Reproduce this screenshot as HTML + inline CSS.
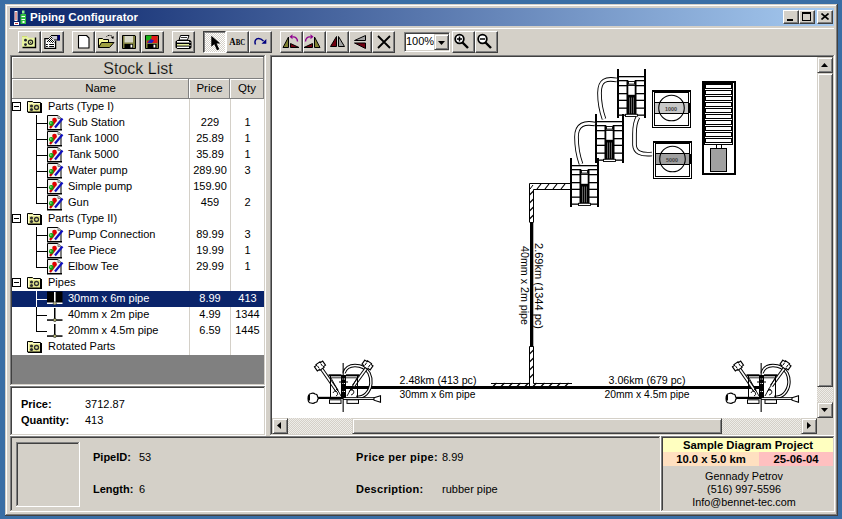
<!DOCTYPE html>
<html><head><meta charset="utf-8"><style>*{box-sizing:border-box;margin:0;padding:0}
html,body{width:842px;height:519px;overflow:hidden;background:#3A6EA5;font-family:"Liberation Sans",sans-serif;font-size:11px;color:#000;position:relative}
.a{position:absolute}
.tb{width:23px;height:22px;top:31px;background:#D4D0C8;border-top:1px solid #fff;border-left:1px solid #fff;border-right:1px solid #404040;border-bottom:1px solid #404040;box-shadow:inset -1px -1px 0 #808080}
.sb{position:absolute;background:#D4D0C8;border-top:1px solid #D4D0C8;border-left:1px solid #D4D0C8;border-right:1px solid #404040;border-bottom:1px solid #404040;box-shadow:inset 1px 1px 0 #fff,inset -1px -1px 0 #808080}
.trk{position:absolute;background-color:#EEECE8;background-image:linear-gradient(45deg,#D4D0C8 25%,transparent 25%,transparent 75%,#D4D0C8 75%),linear-gradient(45deg,#D4D0C8 25%,transparent 25%,transparent 75%,#D4D0C8 75%);background-size:2px 2px;background-position:0 0,1px 1px}
.cb{width:16px;height:14px;top:10px;background:#D4D0C8;border-top:1px solid #fff;border-left:1px solid #fff;border-right:1px solid #404040;border-bottom:1px solid #404040;box-shadow:inset -1px -1px 0 #808080}
.tx{position:absolute;white-space:pre}
b{font-weight:bold}
</style></head><body>
<div class="a" style="left:5px;top:4px;width:833px;height:512px;background:#D4D0C8;"></div>
<div class="a" style="left:5px;top:4px;width:833px;height:1px;background:#D4D0C8;"></div>
<div class="a" style="left:5px;top:4px;width:1px;height:512px;background:#D4D0C8;"></div>
<div class="a" style="left:5px;top:515px;width:833px;height:1px;background:#404040;"></div>
<div class="a" style="left:837px;top:4px;width:1px;height:512px;background:#404040;"></div>
<div class="a" style="left:6px;top:5px;width:831px;height:1px;background:#fff;"></div>
<div class="a" style="left:6px;top:5px;width:1px;height:510px;background:#fff;"></div>
<div class="a" style="left:6px;top:514px;width:831px;height:1px;background:#808080;"></div>
<div class="a" style="left:836px;top:5px;width:1px;height:510px;background:#808080;"></div>
<div class="a" style="left:10px;top:8px;width:824px;height:18px;background:linear-gradient(to right,#0A246A,#A6CAF0)"></div>
<svg class="a" style="left:14px;top:10px" width="16" height="16" viewBox="0 0 16 16">
<rect x="0.5" y="1" width="3" height="10" fill="#fff"/><rect x="1.5" y="2" width="1" height="8" fill="#c03030"/>
<rect x="0" y="12" width="5" height="3" fill="#fff"/><rect x="1" y="13" width="3" height="1" fill="#c03030"/>
<rect x="6.5" y="4" width="5.5" height="10" fill="#30c040"/><rect x="8" y="0.5" width="2.5" height="3" fill="#90f090"/>
<rect x="7.5" y="6" width="3.5" height="1" fill="#fff"/><rect x="7.5" y="9" width="3.5" height="1" fill="#fff"/><rect x="8.5" y="11" width="2" height="2" fill="#fff"/>
</svg>
<div class="a" style="left:30px;top:11px;white-space:pre;color:#fff;font-weight:bold;font-size:11.5px;line-height:13px">Piping Configurator</div>
<div class="a cb" style="left:783px"><div class="a" style="left:3px;top:8px;width:6px;height:2px;background:#000"></div></div>
<div class="a cb" style="left:799px"><div class="a" style="left:2px;top:1px;width:9px;height:9px;border:1px solid #000;border-top-width:2px"></div></div>
<div class="a cb" style="left:817px"><svg class="a" style="left:3px;top:2px" width="8" height="7"><path d="M0.5 0.5L7.5 6.5M7.5 0.5L0.5 6.5" stroke="#000" stroke-width="1.6"/></svg></div>
<div class="a" style="left:9px;top:28px;width:825px;height:1px;background:#fff;"></div>
<div class="a tb" style="left:18px;width:23px"></div>
<div class="a tb" style="left:41px;width:23px"></div>
<div class="a tb" style="left:72px;width:23px"></div>
<div class="a tb" style="left:95px;width:23px"></div>
<div class="a tb" style="left:118px;width:23px"></div>
<div class="a tb" style="left:141px;width:23px"></div>
<div class="a tb" style="left:172px;width:23px"></div>
<div class="a tb" style="left:226px;width:23px"></div>
<div class="a tb" style="left:249px;width:23px"></div>
<div class="a tb" style="left:280px;width:23px"></div>
<div class="a tb" style="left:303px;width:23px"></div>
<div class="a tb" style="left:326px;width:23px"></div>
<div class="a tb" style="left:349px;width:23px"></div>
<div class="a tb" style="left:372px;width:23px"></div>
<div class="a tb" style="left:452px;width:23px"></div>
<div class="a tb" style="left:475px;width:23px"></div>
<div class="a trk" style="left:203px;top:31px;width:23px;height:22px;border-top:1px solid #404040;border-left:1px solid #404040;border-right:1px solid #fff;border-bottom:1px solid #fff;box-shadow:inset 1px 1px 0 #808080;background-color:#fff"></div>
<div class="a" style="left:404px;top:32px;width:46px;height:20px;background:#fff;border-top:1px solid #808080;border-left:1px solid #808080;border-right:1px solid #fff;border-bottom:1px solid #fff;box-shadow:inset 1px 1px 0 #404040,inset -1px -1px 0 #D4D0C8"></div>
<div class="a" style="left:406px;top:34px;font-size:11px;line-height:14px">100%</div>
<div class="a sb" style="left:434px;top:34px;width:15px;height:16px"></div>
<svg class="a" style="left:0;top:0" width="520" height="56" viewBox="0 0 520 56">
<!-- 1 folder gears -->
<path d="M22 36.5h5.5l1 1.2h7v9.8h-13.5z" fill="#E8F4A0"/>
<rect x="22" y="36" width="5" height="1" fill="#D0E070"/>
<path d="M35.5 37.5v10h-13" fill="none" stroke="#000" stroke-width="1.4"/>
<circle cx="25.5" cy="40.2" r="1.4" fill="#202030"/><circle cx="25.5" cy="44.6" r="1.4" fill="#202030"/>
<circle cx="30.5" cy="42.3" r="2.1" fill="none" stroke="#202020" stroke-width="1.3"/><rect x="30" y="41.8" width="1" height="1" fill="#202020"/>
<!-- 2 properties -->
<path d="M51 38.6H44.9V48.4H55.6V41" fill="#fff" stroke="#000" stroke-width="1.3"/>
<defs><pattern id="chk" width="2" height="2" patternUnits="userSpaceOnUse"><rect width="2" height="2" fill="#fff"/><rect width="1" height="1" fill="#000"/><rect x="1" y="1" width="1" height="1" fill="#000"/></pattern></defs>
<path d="M46.3 41.8L51 35.3L54.8 43.2Z" fill="url(#chk)"/>
<path d="M51 35.5H57.8V40H54" fill="#C8C8D0" stroke="#000" stroke-width="1.1"/>
<rect x="57.6" y="35" width="2.4" height="5.6" fill="#000070"/>
<rect x="46" y="44" width="1.8" height="1" fill="#000"/><rect x="49.2" y="44" width="4.8" height="1" fill="#000"/>
<rect x="46" y="46" width="1.8" height="1" fill="#000"/><rect x="49.2" y="46" width="4.8" height="1" fill="#000"/>
<!-- 3 new -->
<path d="M78.5 35.5h8l2.5 2.5v10h-10.5z" fill="#fff" stroke="#000" stroke-width="1.1" stroke-linejoin="round"/>
<!-- 4 open -->
<path d="M98.5 47.5V38.5H102.5L103.5 39.5H108.5V42.5" fill="#F8F898" stroke="#000"/>
<path d="M98.5 47.5L101.5 42.5H114L109.5 47.5Z" fill="#A0A040" stroke="#000" stroke-linejoin="round"/>
<path d="M106.5 36.5C108.5 34.8 111 35 112.5 36.8" fill="none" stroke="#000" stroke-width="1" stroke-dasharray="1 0.6"/><path d="M111 37.2L114 36.2L113.2 39.2Z" fill="#000"/>
<!-- 5 save -->
<path d="M122.5 35.5h12.5l0.5 0.5v12.5h-13z" fill="#808040" stroke="#000"/>
<rect x="124.5" y="36" width="8.5" height="6.5" fill="#D8D8C8"/>
<rect x="124.5" y="44" width="8.5" height="4" fill="#000"/><rect x="130.5" y="44.7" width="1.8" height="2.8" fill="#fff"/>
<!-- 6 save color -->
<path d="M145.5 35.5h13v13h-13z" fill="#808040" stroke="#000"/>
<rect x="147" y="36" width="10.5" height="7" fill="#E01818"/><path d="M146 35.5h5.5v2.5l-2 2.5h-3.5z" fill="#18B018"/><path d="M147.5 43L150.5 39L154 40.5L152 43Z" fill="#2020C0"/>
<rect x="147.5" y="44" width="9" height="4" fill="#000"/><rect x="153.5" y="44.7" width="1.8" height="2.8" fill="#fff"/>
<!-- 7 printer -->
<path d="M180.5 35.5h8.5l-1.5 4.5h-8.5z" fill="#fff" stroke="#000" stroke-linejoin="round"/>
<path d="M181 37.5h6" stroke="#000" stroke-width="0.8"/>
<path d="M177.5 40h12.5l1.5 1.5v6l-1.5 1.5h-12.5l-2 -1.5v-6z" fill="#000"/>
<rect x="177" y="41" width="12" height="1.6" fill="#fff"/>
<rect x="177" y="44" width="12" height="1.6" fill="#E8F0A0"/>
<rect x="177" y="46.6" width="12" height="1.4" fill="#fff"/>
<rect x="189.5" y="42" width="1" height="1" fill="#fff"/><rect x="189.5" y="45" width="1" height="1" fill="#fff"/>
<!-- 8 arrow -->
<path d="M211.3 35.8V46.8L214.3 44.2L217 50.3L219.3 49.2L216.6 43.4H220.3Z" fill="#000"/>
<!-- 9 ABC -->
<text x="229.3" y="45.2" font-family="Liberation Serif" font-size="11" font-weight="bold" fill="#000" textLength="15.8" lengthAdjust="spacingAndGlyphs">A<tspan font-size="8.5">BC</tspan></text>
<!-- 10 redo -->
<path d="M255.5 44.5C254 41 256 38.5 258.5 38.5C260.5 38.5 262 39.5 263.5 41" fill="none" stroke="#000080" stroke-width="1.5"/><path d="M266.3 39v4.8h-4.8z" fill="#000080"/>
<!-- 11 rotate left -->
<path d="M288.5 37v10.5h-5.5z" fill="#808030" stroke="#000" stroke-linejoin="round"/>
<path d="M290.5 43.5v4h8.5z" fill="#700010" stroke="#000" stroke-linejoin="round"/>
<path d="M297.5 41.5c0 -3 -2 -5 -5 -4.5" fill="none" stroke="#900090" stroke-width="1.4"/><path d="M289.5 36.8l3 -2.5v5z" fill="#900090"/>
<!-- 12 rotate right -->
<path d="M314.5 37v10.5h5.5z" fill="#808030" stroke="#000" stroke-linejoin="round"/>
<path d="M312.5 43.5v4h-8.5z" fill="#700010" stroke="#000" stroke-linejoin="round"/>
<path d="M305.5 41.5c0 -3 2 -5 5 -4.5" fill="none" stroke="#900090" stroke-width="1.4"/><path d="M313.5 36.8l-3 -2.5v5z" fill="#900090"/>
<!-- 13 mirror -->
<path d="M336.5 36.5v10h-6z" fill="#700010" stroke="#000" stroke-linejoin="round"/>
<path d="M338.5 36.5v10h6z" fill="#A0A0A0" stroke="#000" stroke-linejoin="round"/>
<!-- 14 flip -->
<path d="M365.5 35.5v5h-11z" fill="#A0A0A0" stroke="#000" stroke-linejoin="round"/>
<path d="M365.5 48.5v-5.5h-11z" fill="#700010" stroke="#000" stroke-linejoin="round"/>
<!-- 15 delete -->
<path d="M378 36l12 12M390 36l-12 12" stroke="#000" stroke-width="1.8"/>
<!-- combo arrow -->
<path d="M438 41h7l-3.5 4z" fill="#000"/>
<!-- zoom in -->
<circle cx="459.5" cy="39" r="4.3" fill="#fff" stroke="#000" stroke-width="1.8"/><path d="M457 39h5M459.5 36.5v5" stroke="#000" stroke-width="1.5"/><path d="M462.5 42.5l5.5 5.5" stroke="#000" stroke-width="2.4"/>
<!-- zoom out -->
<circle cx="482.5" cy="39" r="4.3" fill="#fff" stroke="#000" stroke-width="1.8"/><path d="M480 39h5" stroke="#000" stroke-width="1.5"/><path d="M485.5 42.5l5.5 5.5" stroke="#000" stroke-width="2.4"/>
</svg>
<div class="a" style="left:10px;top:55px;width:256px;height:1px;background:#808080;"></div>
<div class="a" style="left:10px;top:55px;width:1px;height:331px;background:#808080;"></div>
<div class="a" style="left:10px;top:385px;width:256px;height:1px;background:#fff;"></div>
<div class="a" style="left:265px;top:55px;width:1px;height:331px;background:#fff;"></div>
<div class="a" style="left:11px;top:56px;width:254px;height:1px;background:#404040;"></div>
<div class="a" style="left:11px;top:56px;width:1px;height:329px;background:#404040;"></div>
<div class="a" style="left:11px;top:384px;width:254px;height:1px;background:#D4D0C8;"></div>
<div class="a" style="left:264px;top:56px;width:1px;height:329px;background:#D4D0C8;"></div>
<div class="a" style="left:12px;top:57px;width:252px;height:327px;background:#fff;"></div>
<div class="a" style="left:12px;top:57px;width:252px;height:22px;background:#D4D0C8;"></div>
<div class="a" style="left:12px;top:57px;width:252px;height:1px;background:#fff;"></div>
<div class="a" style="left:12px;top:57px;width:1px;height:22px;background:#fff;"></div>
<div class="a" style="left:12px;top:78px;width:252px;height:1px;background:#808080;"></div>
<div class="a" style="left:263px;top:57px;width:1px;height:22px;background:#808080;"></div>
<div class="tx" style="left:12px;top:60px;width:252px;text-align:center;font-size:16px;line-height:18px;-webkit-text-stroke:0.25px #D4D0C8">Stock List</div>
<div class="a" style="left:12px;top:79px;width:177px;height:20px;background:#D4D0C8;"></div>
<div class="a" style="left:12px;top:79px;width:177px;height:1px;background:#fff;"></div>
<div class="a" style="left:12px;top:79px;width:1px;height:20px;background:#fff;"></div>
<div class="a" style="left:12px;top:98px;width:177px;height:1px;background:#808080;"></div>
<div class="a" style="left:188px;top:79px;width:1px;height:20px;background:#808080;"></div>
<div class="tx" style="left:12px;top:82px;width:177px;text-align:center;font-size:11.5px;line-height:13px">Name</div>
<div class="a" style="left:189px;top:79px;width:41px;height:20px;background:#D4D0C8;"></div>
<div class="a" style="left:189px;top:79px;width:41px;height:1px;background:#fff;"></div>
<div class="a" style="left:189px;top:79px;width:1px;height:20px;background:#fff;"></div>
<div class="a" style="left:189px;top:98px;width:41px;height:1px;background:#808080;"></div>
<div class="a" style="left:229px;top:79px;width:1px;height:20px;background:#808080;"></div>
<div class="tx" style="left:189px;top:82px;width:41px;text-align:center;font-size:11.5px;line-height:13px">Price</div>
<div class="a" style="left:230px;top:79px;width:34px;height:20px;background:#D4D0C8;"></div>
<div class="a" style="left:230px;top:79px;width:34px;height:1px;background:#fff;"></div>
<div class="a" style="left:230px;top:79px;width:1px;height:20px;background:#fff;"></div>
<div class="a" style="left:230px;top:98px;width:34px;height:1px;background:#808080;"></div>
<div class="a" style="left:263px;top:79px;width:1px;height:20px;background:#808080;"></div>
<div class="tx" style="left:230px;top:82px;width:34px;text-align:center;font-size:11.5px;line-height:13px">Qty</div>
<div class="a" style="left:189px;top:99px;width:1px;height:256px;background:#D4D0C8;"></div>
<div class="a" style="left:230px;top:99px;width:1px;height:256px;background:#D4D0C8;"></div>
<div class="a" style="left:12px;top:102px;width:9px;height:9px;border:1px solid #000;background:#fff"></div>
<div class="a" style="left:14px;top:106px;width:5px;height:1px;background:#000;"></div>
<svg class="a" style="left:27px;top:99px" width="16" height="14" viewBox="0 0 16 14"><path d="M0.5 2.5h5l1 1h7v9.5h-13z" fill="#E6E890" stroke="#000"/><rect x="1" y="3" width="1" height="9" fill="#FFFFD0"/><rect x="1" y="4" width="12" height="1" fill="#FFFFD0"/><rect x="13.5" y="4" width="1.5" height="10" fill="#000"/><rect x="1" y="13" width="14" height="1" fill="#000"/><circle cx="4.5" cy="7" r="1.6" fill="#303030"/><circle cx="4.5" cy="10.5" r="1.6" fill="#303030"/><circle cx="9.5" cy="8.5" r="2" fill="#E6E890" stroke="#303030" stroke-width="1.3"/></svg>
<div class="tx" style="left:48px;top:99px;line-height:14px;color:#000">Parts (Type I)</div>
<div class="a" style="left:36px;top:115px;width:1px;height:8px;background:#000;"></div>
<div class="a" style="left:36px;top:123px;width:11px;height:1px;background:#000;"></div>
<div class="a" style="left:36px;top:123px;width:1px;height:8px;background:#000;"></div>
<svg class="a" style="left:47px;top:114px" width="17" height="17" viewBox="0 0 17 17"><path d="M0.5 1.5h10.5l3 3v11h-13.5z" fill="#F4F4F0" stroke="#000"/><path d="M11 1.5v3h3" fill="#C0C0C0" stroke="#808080"/><rect x="0" y="15" width="15" height="1.5" fill="#000"/><path d="M3 14L9 6" stroke="#D00000" stroke-width="2.2"/><circle cx="7.5" cy="6" r="2.3" fill="#E00000"/><path d="M8 13.5L15.5 4.5" stroke="#1010C0" stroke-width="2.2"/><circle cx="4.3" cy="9.5" r="2.4" fill="#10A010"/><circle cx="3.8" cy="9" r="0.9" fill="#80E080"/></svg>
<div class="tx" style="left:68px;top:115px;line-height:14px;color:#000">Sub Station</div>
<div class="tx" style="left:190px;top:115px;width:40px;text-align:center;line-height:14px;color:#000">229</div>
<div class="tx" style="left:231px;top:115px;width:33px;text-align:center;line-height:14px;color:#000">1</div>
<div class="a" style="left:36px;top:131px;width:1px;height:8px;background:#000;"></div>
<div class="a" style="left:36px;top:139px;width:11px;height:1px;background:#000;"></div>
<div class="a" style="left:36px;top:139px;width:1px;height:8px;background:#000;"></div>
<svg class="a" style="left:47px;top:130px" width="17" height="17" viewBox="0 0 17 17"><path d="M0.5 1.5h10.5l3 3v11h-13.5z" fill="#F4F4F0" stroke="#000"/><path d="M11 1.5v3h3" fill="#C0C0C0" stroke="#808080"/><rect x="0" y="15" width="15" height="1.5" fill="#000"/><path d="M3 14L9 6" stroke="#D00000" stroke-width="2.2"/><circle cx="7.5" cy="6" r="2.3" fill="#E00000"/><path d="M8 13.5L15.5 4.5" stroke="#1010C0" stroke-width="2.2"/><circle cx="4.3" cy="9.5" r="2.4" fill="#10A010"/><circle cx="3.8" cy="9" r="0.9" fill="#80E080"/></svg>
<div class="tx" style="left:68px;top:131px;line-height:14px;color:#000">Tank 1000</div>
<div class="tx" style="left:190px;top:131px;width:40px;text-align:center;line-height:14px;color:#000">25.89</div>
<div class="tx" style="left:231px;top:131px;width:33px;text-align:center;line-height:14px;color:#000">1</div>
<div class="a" style="left:36px;top:147px;width:1px;height:8px;background:#000;"></div>
<div class="a" style="left:36px;top:155px;width:11px;height:1px;background:#000;"></div>
<div class="a" style="left:36px;top:155px;width:1px;height:8px;background:#000;"></div>
<svg class="a" style="left:47px;top:146px" width="17" height="17" viewBox="0 0 17 17"><path d="M0.5 1.5h10.5l3 3v11h-13.5z" fill="#F4F4F0" stroke="#000"/><path d="M11 1.5v3h3" fill="#C0C0C0" stroke="#808080"/><rect x="0" y="15" width="15" height="1.5" fill="#000"/><path d="M3 14L9 6" stroke="#D00000" stroke-width="2.2"/><circle cx="7.5" cy="6" r="2.3" fill="#E00000"/><path d="M8 13.5L15.5 4.5" stroke="#1010C0" stroke-width="2.2"/><circle cx="4.3" cy="9.5" r="2.4" fill="#10A010"/><circle cx="3.8" cy="9" r="0.9" fill="#80E080"/></svg>
<div class="tx" style="left:68px;top:147px;line-height:14px;color:#000">Tank 5000</div>
<div class="tx" style="left:190px;top:147px;width:40px;text-align:center;line-height:14px;color:#000">35.89</div>
<div class="tx" style="left:231px;top:147px;width:33px;text-align:center;line-height:14px;color:#000">1</div>
<div class="a" style="left:36px;top:163px;width:1px;height:8px;background:#000;"></div>
<div class="a" style="left:36px;top:171px;width:11px;height:1px;background:#000;"></div>
<div class="a" style="left:36px;top:171px;width:1px;height:8px;background:#000;"></div>
<svg class="a" style="left:47px;top:162px" width="17" height="17" viewBox="0 0 17 17"><path d="M0.5 1.5h10.5l3 3v11h-13.5z" fill="#F4F4F0" stroke="#000"/><path d="M11 1.5v3h3" fill="#C0C0C0" stroke="#808080"/><rect x="0" y="15" width="15" height="1.5" fill="#000"/><path d="M3 14L9 6" stroke="#D00000" stroke-width="2.2"/><circle cx="7.5" cy="6" r="2.3" fill="#E00000"/><path d="M8 13.5L15.5 4.5" stroke="#1010C0" stroke-width="2.2"/><circle cx="4.3" cy="9.5" r="2.4" fill="#10A010"/><circle cx="3.8" cy="9" r="0.9" fill="#80E080"/></svg>
<div class="tx" style="left:68px;top:163px;line-height:14px;color:#000">Water pump</div>
<div class="tx" style="left:190px;top:163px;width:40px;text-align:center;line-height:14px;color:#000">289.90</div>
<div class="tx" style="left:231px;top:163px;width:33px;text-align:center;line-height:14px;color:#000">3</div>
<div class="a" style="left:36px;top:179px;width:1px;height:8px;background:#000;"></div>
<div class="a" style="left:36px;top:187px;width:11px;height:1px;background:#000;"></div>
<div class="a" style="left:36px;top:187px;width:1px;height:8px;background:#000;"></div>
<svg class="a" style="left:47px;top:178px" width="17" height="17" viewBox="0 0 17 17"><path d="M0.5 1.5h10.5l3 3v11h-13.5z" fill="#F4F4F0" stroke="#000"/><path d="M11 1.5v3h3" fill="#C0C0C0" stroke="#808080"/><rect x="0" y="15" width="15" height="1.5" fill="#000"/><path d="M3 14L9 6" stroke="#D00000" stroke-width="2.2"/><circle cx="7.5" cy="6" r="2.3" fill="#E00000"/><path d="M8 13.5L15.5 4.5" stroke="#1010C0" stroke-width="2.2"/><circle cx="4.3" cy="9.5" r="2.4" fill="#10A010"/><circle cx="3.8" cy="9" r="0.9" fill="#80E080"/></svg>
<div class="tx" style="left:68px;top:179px;line-height:14px;color:#000">Simple pump</div>
<div class="tx" style="left:190px;top:179px;width:40px;text-align:center;line-height:14px;color:#000">159.90</div>
<div class="a" style="left:36px;top:195px;width:1px;height:8px;background:#000;"></div>
<div class="a" style="left:36px;top:203px;width:11px;height:1px;background:#000;"></div>
<svg class="a" style="left:47px;top:194px" width="17" height="17" viewBox="0 0 17 17"><path d="M0.5 1.5h10.5l3 3v11h-13.5z" fill="#F4F4F0" stroke="#000"/><path d="M11 1.5v3h3" fill="#C0C0C0" stroke="#808080"/><rect x="0" y="15" width="15" height="1.5" fill="#000"/><path d="M3 14L9 6" stroke="#D00000" stroke-width="2.2"/><circle cx="7.5" cy="6" r="2.3" fill="#E00000"/><path d="M8 13.5L15.5 4.5" stroke="#1010C0" stroke-width="2.2"/><circle cx="4.3" cy="9.5" r="2.4" fill="#10A010"/><circle cx="3.8" cy="9" r="0.9" fill="#80E080"/></svg>
<div class="tx" style="left:68px;top:195px;line-height:14px;color:#000">Gun</div>
<div class="tx" style="left:190px;top:195px;width:40px;text-align:center;line-height:14px;color:#000">459</div>
<div class="tx" style="left:231px;top:195px;width:33px;text-align:center;line-height:14px;color:#000">2</div>
<div class="a" style="left:12px;top:214px;width:9px;height:9px;border:1px solid #000;background:#fff"></div>
<div class="a" style="left:14px;top:218px;width:5px;height:1px;background:#000;"></div>
<svg class="a" style="left:27px;top:211px" width="16" height="14" viewBox="0 0 16 14"><path d="M0.5 2.5h5l1 1h7v9.5h-13z" fill="#E6E890" stroke="#000"/><rect x="1" y="3" width="1" height="9" fill="#FFFFD0"/><rect x="1" y="4" width="12" height="1" fill="#FFFFD0"/><rect x="13.5" y="4" width="1.5" height="10" fill="#000"/><rect x="1" y="13" width="14" height="1" fill="#000"/><circle cx="4.5" cy="7" r="1.6" fill="#303030"/><circle cx="4.5" cy="10.5" r="1.6" fill="#303030"/><circle cx="9.5" cy="8.5" r="2" fill="#E6E890" stroke="#303030" stroke-width="1.3"/></svg>
<div class="tx" style="left:48px;top:211px;line-height:14px;color:#000">Parts (Type II)</div>
<div class="a" style="left:36px;top:227px;width:1px;height:8px;background:#000;"></div>
<div class="a" style="left:36px;top:235px;width:11px;height:1px;background:#000;"></div>
<div class="a" style="left:36px;top:235px;width:1px;height:8px;background:#000;"></div>
<svg class="a" style="left:47px;top:226px" width="17" height="17" viewBox="0 0 17 17"><path d="M0.5 1.5h10.5l3 3v11h-13.5z" fill="#F4F4F0" stroke="#000"/><path d="M11 1.5v3h3" fill="#C0C0C0" stroke="#808080"/><rect x="0" y="15" width="15" height="1.5" fill="#000"/><path d="M3 14L9 6" stroke="#D00000" stroke-width="2.2"/><circle cx="7.5" cy="6" r="2.3" fill="#E00000"/><path d="M8 13.5L15.5 4.5" stroke="#1010C0" stroke-width="2.2"/><circle cx="4.3" cy="9.5" r="2.4" fill="#10A010"/><circle cx="3.8" cy="9" r="0.9" fill="#80E080"/></svg>
<div class="tx" style="left:68px;top:227px;line-height:14px;color:#000">Pump Connection</div>
<div class="tx" style="left:190px;top:227px;width:40px;text-align:center;line-height:14px;color:#000">89.99</div>
<div class="tx" style="left:231px;top:227px;width:33px;text-align:center;line-height:14px;color:#000">3</div>
<div class="a" style="left:36px;top:243px;width:1px;height:8px;background:#000;"></div>
<div class="a" style="left:36px;top:251px;width:11px;height:1px;background:#000;"></div>
<div class="a" style="left:36px;top:251px;width:1px;height:8px;background:#000;"></div>
<svg class="a" style="left:47px;top:242px" width="17" height="17" viewBox="0 0 17 17"><path d="M0.5 1.5h10.5l3 3v11h-13.5z" fill="#F4F4F0" stroke="#000"/><path d="M11 1.5v3h3" fill="#C0C0C0" stroke="#808080"/><rect x="0" y="15" width="15" height="1.5" fill="#000"/><path d="M3 14L9 6" stroke="#D00000" stroke-width="2.2"/><circle cx="7.5" cy="6" r="2.3" fill="#E00000"/><path d="M8 13.5L15.5 4.5" stroke="#1010C0" stroke-width="2.2"/><circle cx="4.3" cy="9.5" r="2.4" fill="#10A010"/><circle cx="3.8" cy="9" r="0.9" fill="#80E080"/></svg>
<div class="tx" style="left:68px;top:243px;line-height:14px;color:#000">Tee Piece</div>
<div class="tx" style="left:190px;top:243px;width:40px;text-align:center;line-height:14px;color:#000">19.99</div>
<div class="tx" style="left:231px;top:243px;width:33px;text-align:center;line-height:14px;color:#000">1</div>
<div class="a" style="left:36px;top:259px;width:1px;height:8px;background:#000;"></div>
<div class="a" style="left:36px;top:267px;width:11px;height:1px;background:#000;"></div>
<svg class="a" style="left:47px;top:258px" width="17" height="17" viewBox="0 0 17 17"><path d="M0.5 1.5h10.5l3 3v11h-13.5z" fill="#F4F4F0" stroke="#000"/><path d="M11 1.5v3h3" fill="#C0C0C0" stroke="#808080"/><rect x="0" y="15" width="15" height="1.5" fill="#000"/><path d="M3 14L9 6" stroke="#D00000" stroke-width="2.2"/><circle cx="7.5" cy="6" r="2.3" fill="#E00000"/><path d="M8 13.5L15.5 4.5" stroke="#1010C0" stroke-width="2.2"/><circle cx="4.3" cy="9.5" r="2.4" fill="#10A010"/><circle cx="3.8" cy="9" r="0.9" fill="#80E080"/></svg>
<div class="tx" style="left:68px;top:259px;line-height:14px;color:#000">Elbow Tee</div>
<div class="tx" style="left:190px;top:259px;width:40px;text-align:center;line-height:14px;color:#000">29.99</div>
<div class="tx" style="left:231px;top:259px;width:33px;text-align:center;line-height:14px;color:#000">1</div>
<div class="a" style="left:12px;top:278px;width:9px;height:9px;border:1px solid #000;background:#fff"></div>
<div class="a" style="left:14px;top:282px;width:5px;height:1px;background:#000;"></div>
<svg class="a" style="left:27px;top:275px" width="16" height="14" viewBox="0 0 16 14"><path d="M0.5 2.5h5l1 1h7v9.5h-13z" fill="#E6E890" stroke="#000"/><rect x="1" y="3" width="1" height="9" fill="#FFFFD0"/><rect x="1" y="4" width="12" height="1" fill="#FFFFD0"/><rect x="13.5" y="4" width="1.5" height="10" fill="#000"/><rect x="1" y="13" width="14" height="1" fill="#000"/><circle cx="4.5" cy="7" r="1.6" fill="#303030"/><circle cx="4.5" cy="10.5" r="1.6" fill="#303030"/><circle cx="9.5" cy="8.5" r="2" fill="#E6E890" stroke="#303030" stroke-width="1.3"/></svg>
<div class="tx" style="left:48px;top:275px;line-height:14px;color:#000">Pipes</div>
<div class="a" style="left:12px;top:291px;width:252px;height:16px;background:#0A246A;"></div>
<div class="a" style="left:36px;top:291px;width:1px;height:8px;background:#fff;"></div>
<div class="a" style="left:36px;top:299px;width:11px;height:1px;background:#fff;"></div>
<div class="a" style="left:36px;top:299px;width:1px;height:8px;background:#fff;"></div>
<svg class="a" style="left:47px;top:290px" width="17" height="17" viewBox="0 0 17 17"><rect x="0" y="1.5" width="15.5" height="12" fill="#000"/><rect x="7" y="2" width="1.6" height="11" fill="#fff"/><rect x="0" y="12.5" width="15.5" height="1.5" fill="#fff"/><circle cx="7.8" cy="13.3" r="1.6" fill="#C0C090" stroke="#303030" stroke-width="0.6"/></svg>
<div class="tx" style="left:68px;top:291px;line-height:14px;color:#fff">30mm x 6m pipe</div>
<div class="tx" style="left:190px;top:291px;width:40px;text-align:center;line-height:14px;color:#fff">8.99</div>
<div class="tx" style="left:231px;top:291px;width:33px;text-align:center;line-height:14px;color:#fff">413</div>
<div class="a" style="left:36px;top:307px;width:1px;height:8px;background:#000;"></div>
<div class="a" style="left:36px;top:315px;width:11px;height:1px;background:#000;"></div>
<div class="a" style="left:36px;top:315px;width:1px;height:8px;background:#000;"></div>
<svg class="a" style="left:47px;top:306px" width="17" height="17" viewBox="0 0 17 17"><rect x="7" y="2" width="1.5" height="12" fill="#000"/><rect x="0" y="13.3" width="15.5" height="1.5" fill="#000"/><circle cx="7.8" cy="14" r="1.6" fill="#B0B070" stroke="#202020" stroke-width="0.6"/></svg>
<div class="tx" style="left:68px;top:307px;line-height:14px;color:#000">40mm x 2m pipe</div>
<div class="tx" style="left:190px;top:307px;width:40px;text-align:center;line-height:14px;color:#000">4.99</div>
<div class="tx" style="left:231px;top:307px;width:33px;text-align:center;line-height:14px;color:#000">1344</div>
<div class="a" style="left:36px;top:323px;width:1px;height:8px;background:#000;"></div>
<div class="a" style="left:36px;top:331px;width:11px;height:1px;background:#000;"></div>
<svg class="a" style="left:47px;top:322px" width="17" height="17" viewBox="0 0 17 17"><rect x="7" y="2" width="1.5" height="12" fill="#000"/><rect x="0" y="13.3" width="15.5" height="1.5" fill="#000"/><circle cx="7.8" cy="14" r="1.6" fill="#B0B070" stroke="#202020" stroke-width="0.6"/></svg>
<div class="tx" style="left:68px;top:323px;line-height:14px;color:#000">20mm x 4.5m pipe</div>
<div class="tx" style="left:190px;top:323px;width:40px;text-align:center;line-height:14px;color:#000">6.59</div>
<div class="tx" style="left:231px;top:323px;width:33px;text-align:center;line-height:14px;color:#000">1445</div>
<svg class="a" style="left:27px;top:339px" width="16" height="14" viewBox="0 0 16 14"><path d="M0.5 2.5h5l1 1h7v9.5h-13z" fill="#E6E890" stroke="#000"/><rect x="1" y="3" width="1" height="9" fill="#FFFFD0"/><rect x="1" y="4" width="12" height="1" fill="#FFFFD0"/><rect x="13.5" y="4" width="1.5" height="10" fill="#000"/><rect x="1" y="13" width="14" height="1" fill="#000"/><circle cx="4.5" cy="7" r="1.6" fill="#303030"/><circle cx="4.5" cy="10.5" r="1.6" fill="#303030"/><circle cx="9.5" cy="8.5" r="2" fill="#E6E890" stroke="#303030" stroke-width="1.3"/></svg>
<div class="tx" style="left:48px;top:339px;line-height:14px;color:#000">Rotated Parts</div>
<div class="a" style="left:12px;top:355px;width:252px;height:29px;background:#808080;"></div>
<div class="a" style="left:10px;top:386px;width:256px;height:1px;background:#808080;"></div>
<div class="a" style="left:10px;top:386px;width:1px;height:50px;background:#808080;"></div>
<div class="a" style="left:10px;top:435px;width:256px;height:1px;background:#fff;"></div>
<div class="a" style="left:265px;top:386px;width:1px;height:50px;background:#fff;"></div>
<div class="a" style="left:11px;top:387px;width:254px;height:1px;background:#404040;"></div>
<div class="a" style="left:11px;top:387px;width:1px;height:48px;background:#404040;"></div>
<div class="a" style="left:11px;top:434px;width:254px;height:1px;background:#D4D0C8;"></div>
<div class="a" style="left:264px;top:387px;width:1px;height:48px;background:#D4D0C8;"></div>
<div class="a" style="left:12px;top:388px;width:252px;height:46px;background:#fff;"></div>
<div class="a" style="left:21px;top:397px;white-space:pre;line-height:14px"><b>Price:</b></div>
<div class="a" style="left:85px;top:397px;white-space:pre;line-height:14px">3712.87</div>
<div class="a" style="left:21px;top:413px;white-space:pre;line-height:14px"><b>Quantity:</b></div>
<div class="a" style="left:85px;top:413px;white-space:pre;line-height:14px">413</div>
<div class="a" style="left:270px;top:55px;width:565px;height:1px;background:#808080;"></div>
<div class="a" style="left:270px;top:55px;width:1px;height:381px;background:#808080;"></div>
<div class="a" style="left:270px;top:435px;width:565px;height:1px;background:#fff;"></div>
<div class="a" style="left:834px;top:55px;width:1px;height:381px;background:#fff;"></div>
<div class="a" style="left:271px;top:56px;width:563px;height:1px;background:#404040;"></div>
<div class="a" style="left:271px;top:56px;width:1px;height:379px;background:#404040;"></div>
<div class="a" style="left:271px;top:434px;width:563px;height:1px;background:#D4D0C8;"></div>
<div class="a" style="left:833px;top:56px;width:1px;height:379px;background:#D4D0C8;"></div>
<div class="a" style="left:272px;top:57px;width:561px;height:377px;background:#fff;"></div>
<svg class="a" style="left:272px;top:57px" width="545" height="361" viewBox="272 57 545 361"><g transform="translate(617,69)"><rect x="0" y="0" width="2" height="49" fill="#000"/><rect x="27" y="0" width="2" height="49" fill="#000"/><rect x="2" y="7" width="25" height="1.3" fill="#000"/><rect x="2" y="11" width="25" height="1.3" fill="#000"/><rect x="2" y="16" width="25" height="1.3" fill="#000"/><rect x="2" y="24" width="25" height="1.3" fill="#000"/><rect x="2" y="30.7" width="25" height="1.3" fill="#000"/><rect x="2" y="38.5" width="25" height="1.3" fill="#000"/><rect x="2" y="45.5" width="25" height="1.3" fill="#000"/><rect x="10" y="11" width="9" height="36" fill="#fff"/><rect x="9.5" y="11" width="1.8" height="36" fill="#000"/><rect x="17.7" y="11" width="1.8" height="36" fill="#000"/><rect x="11.5" y="12.5" width="6" height="2.6" fill="#fff" stroke="#000" stroke-width="0.9"/><rect x="10" y="15.8" width="9" height="1.1" fill="#000"/><rect x="10" y="25.8" width="9" height="2.4" fill="#000"/><rect x="10" y="28" width="9" height="17" fill="#000"/><rect x="12.2" y="28.5" width="0.6" height="16" fill="#A0A0A0"/><rect x="14.2" y="28.5" width="0.6" height="16" fill="#A0A0A0"/><rect x="16.2" y="28.5" width="0.6" height="16" fill="#A0A0A0"/><rect x="8.5" y="45.3" width="12" height="2.2" fill="#fff" stroke="#000" stroke-width="0.9"/></g>
<g transform="translate(595,114)"><rect x="0" y="0" width="2" height="49" fill="#000"/><rect x="27" y="0" width="2" height="49" fill="#000"/><rect x="2" y="7" width="25" height="1.3" fill="#000"/><rect x="2" y="11" width="25" height="1.3" fill="#000"/><rect x="2" y="16" width="25" height="1.3" fill="#000"/><rect x="2" y="24" width="25" height="1.3" fill="#000"/><rect x="2" y="30.7" width="25" height="1.3" fill="#000"/><rect x="2" y="38.5" width="25" height="1.3" fill="#000"/><rect x="2" y="45.5" width="25" height="1.3" fill="#000"/><rect x="10" y="11" width="9" height="36" fill="#fff"/><rect x="9.5" y="11" width="1.8" height="36" fill="#000"/><rect x="17.7" y="11" width="1.8" height="36" fill="#000"/><rect x="11.5" y="12.5" width="6" height="2.6" fill="#fff" stroke="#000" stroke-width="0.9"/><rect x="10" y="15.8" width="9" height="1.1" fill="#000"/><rect x="10" y="25.8" width="9" height="2.4" fill="#000"/><rect x="10" y="28" width="9" height="17" fill="#000"/><rect x="12.2" y="28.5" width="0.6" height="16" fill="#A0A0A0"/><rect x="14.2" y="28.5" width="0.6" height="16" fill="#A0A0A0"/><rect x="16.2" y="28.5" width="0.6" height="16" fill="#A0A0A0"/><rect x="8.5" y="45.3" width="12" height="2.2" fill="#fff" stroke="#000" stroke-width="0.9"/></g>
<g transform="translate(570,158)"><rect x="0" y="0" width="2" height="49" fill="#000"/><rect x="27" y="0" width="2" height="49" fill="#000"/><rect x="2" y="7" width="25" height="1.3" fill="#000"/><rect x="2" y="11" width="25" height="1.3" fill="#000"/><rect x="2" y="16" width="25" height="1.3" fill="#000"/><rect x="2" y="24" width="25" height="1.3" fill="#000"/><rect x="2" y="30.7" width="25" height="1.3" fill="#000"/><rect x="2" y="38.5" width="25" height="1.3" fill="#000"/><rect x="2" y="45.5" width="25" height="1.3" fill="#000"/><rect x="10" y="11" width="9" height="36" fill="#fff"/><rect x="9.5" y="11" width="1.8" height="36" fill="#000"/><rect x="17.7" y="11" width="1.8" height="36" fill="#000"/><rect x="11.5" y="12.5" width="6" height="2.6" fill="#fff" stroke="#000" stroke-width="0.9"/><rect x="10" y="15.8" width="9" height="1.1" fill="#000"/><rect x="10" y="25.8" width="9" height="2.4" fill="#000"/><rect x="10" y="28" width="9" height="17" fill="#000"/><rect x="12.2" y="28.5" width="0.6" height="16" fill="#A0A0A0"/><rect x="14.2" y="28.5" width="0.6" height="16" fill="#A0A0A0"/><rect x="16.2" y="28.5" width="0.6" height="16" fill="#A0A0A0"/><rect x="8.5" y="45.3" width="12" height="2.2" fill="#fff" stroke="#000" stroke-width="0.9"/></g>
<path d="M617 80 C606 78 599.5 80 599.5 93 C599.5 104 601.5 112 604 119" fill="none" stroke="#000" stroke-width="4.6"/><path d="M617 80 C606 78 599.5 80 599.5 93 C599.5 104 601.5 112 604 119" fill="none" stroke="#fff" stroke-width="2.8"/>
<path d="M595 124 C585 122 576.5 124 576.5 137 C576.5 149 578.5 157 581 164" fill="none" stroke="#000" stroke-width="4.6"/><path d="M595 124 C585 122 576.5 124 576.5 137 C576.5 149 578.5 157 581 164" fill="none" stroke="#fff" stroke-width="2.8"/>
<path d="M638 117 C635 122 634.5 126 634.5 134 L634.5 145 C635 152 640 155 652 154" fill="none" stroke="#000" stroke-width="4.6"/><path d="M638 117 C635 122 634.5 126 634.5 134 L634.5 145 C635 152 640 155 652 154" fill="none" stroke="#fff" stroke-width="2.8"/>
<g transform="translate(652,90)"><rect x="0.5" y="0.5" width="38" height="37" fill="#fff" stroke="#000"/><rect x="0" y="0" width="39" height="2" fill="#000"/><rect x="2.5" y="2.5" width="34" height="33" fill="none" stroke="#000"/><rect x="2.5" y="12.5" width="34" height="11" fill="#C8C8C8" stroke="#000"/><circle cx="19.5" cy="18" r="12.8" fill="none" stroke="#000" stroke-width="1.1"/><rect x="36" y="13" width="2" height="10" fill="#000"/><text x="19" y="20.5" font-family="Liberation Sans" font-size="6" font-weight="bold" fill="#404040" text-anchor="middle" textLength="12" lengthAdjust="spacingAndGlyphs">1000</text></g>
<g transform="translate(653,141)"><rect x="0.5" y="0.5" width="38" height="37" fill="#fff" stroke="#000"/><rect x="0" y="0" width="39" height="2" fill="#000"/><rect x="2.5" y="2.5" width="34" height="33" fill="none" stroke="#000"/><rect x="2.5" y="12.5" width="34" height="11" fill="#A0A0A0" stroke="#000"/><circle cx="19.5" cy="18" r="12.8" fill="none" stroke="#000" stroke-width="1.1"/><rect x="36" y="13" width="2" height="10" fill="#000"/><text x="19" y="20.5" font-family="Liberation Sans" font-size="6" font-weight="bold" fill="#404040" text-anchor="middle" textLength="12" lengthAdjust="spacingAndGlyphs">5000</text></g>
<g><rect x="703" y="82" width="32" height="92" fill="#fff" stroke="#000" stroke-width="2"/><rect x="704.5" y="83.5" width="28" height="61" fill="#fff" stroke="#000" stroke-width="1"/><rect x="705.5" y="84.5" width="26" height="4" fill="#fff" stroke="#000" stroke-width="1"/><rect x="705.5" y="90.5" width="26" height="4" fill="#fff" stroke="#000" stroke-width="1"/><rect x="705.5" y="96.5" width="26" height="4" fill="#fff" stroke="#000" stroke-width="1"/><rect x="705.5" y="102.5" width="26" height="4" fill="#fff" stroke="#000" stroke-width="1"/><rect x="705.5" y="108.5" width="26" height="4" fill="#fff" stroke="#000" stroke-width="1"/><rect x="705.5" y="114.5" width="26" height="4" fill="#fff" stroke="#000" stroke-width="1"/><rect x="705.5" y="120.5" width="26" height="4" fill="#fff" stroke="#000" stroke-width="1"/><rect x="705.5" y="126.5" width="26" height="4" fill="#fff" stroke="#000" stroke-width="1"/><rect x="705.5" y="132.5" width="26" height="4" fill="#fff" stroke="#000" stroke-width="1"/><rect x="705.5" y="138.5" width="26" height="4" fill="#fff" stroke="#000" stroke-width="1"/><rect x="716.5" y="144.5" width="5" height="4" fill="#fff" stroke="#000"/><rect x="710.5" y="148.5" width="16" height="23" fill="#A0A0A0" stroke="#000"/></g>
<path d="M529.5 222.5V183.5H570M533.5 222.5V189.5H570" fill="none" stroke="#000" stroke-width="1"/>
<path d="M537.0 189.0L541.0 184.0M545.0 189.0L549.0 184.0M553.0 189.0L557.0 184.0M561.0 189.0L565.0 184.0" stroke="#000" stroke-width="1.2" fill="none"/>
<path d="M529.5 195.0L533.5 191.0M529.5 203.0L533.5 199.0M529.5 211.0L533.5 207.0M529.5 219.0L533.5 215.0" stroke="#000" stroke-width="1.2" fill="none"/>
<path d="M530 189 L533 185" stroke="#000" stroke-width="1"/>
<rect x="530" y="222" width="3.3" height="125" fill="#000"/>
<path d="M529.5 386V346.5H533.5V383.5" fill="none" stroke="#000" stroke-width="1"/>
<path d="M529.5 354.0L533.5 350.0M529.5 362.0L533.5 358.0M529.5 370.0L533.5 366.0M529.5 378.0L533.5 374.0" stroke="#000" stroke-width="1.2" fill="none"/>
<path d="M491 383.5H529.5M533.5 383.5H572" fill="none" stroke="#000" stroke-width="1"/>
<path d="M492.5 387.0L496.5 383.0M500.5 387.0L504.5 383.0M508.5 387.0L512.5 383.0M516.5 387.0L520.5 383.0M524.5 387.0L528.5 383.0M532.5 387.0L536.5 383.0M540.5 387.0L544.5 383.0M548.5 387.0L552.5 383.0M556.5 387.0L560.5 383.0M564.5 387.0L568.5 383.0" stroke="#000" stroke-width="1.2" fill="none"/>
<rect x="343" y="386" width="418" height="3" fill="#000"/>
<text x="399.5" y="384" font-family="Liberation Sans" font-size="11" fill="#000" textLength="77" lengthAdjust="spacingAndGlyphs">2.48km (413 pc)</text>
<text x="399.5" y="398" font-family="Liberation Sans" font-size="11" fill="#000" textLength="76" lengthAdjust="spacingAndGlyphs">30mm x 6m pipe</text>
<text x="608.5" y="384" font-family="Liberation Sans" font-size="11" fill="#000" textLength="77" lengthAdjust="spacingAndGlyphs">3.06km (679 pc)</text>
<text x="604.5" y="398" font-family="Liberation Sans" font-size="11" fill="#000" textLength="85" lengthAdjust="spacingAndGlyphs">20mm x 4.5m pipe</text>
<g transform="translate(535,243) rotate(90)"><text x="0" y="0" font-family="Liberation Sans" font-size="11" fill="#000" textLength="86" lengthAdjust="spacingAndGlyphs">2.69km (1344 pc)</text></g>
<g transform="translate(521,246) rotate(90)"><text x="0" y="0" font-family="Liberation Sans" font-size="11" fill="#000" textLength="79" lengthAdjust="spacingAndGlyphs">40mm x 2m pipe</text></g>
<g transform="translate(0,0)"><path d="M344 373 C346 367 350 365.5 355 365.5 C362 365.5 366 368 369 373 C372 379 372 388 366 394 C363 397 360 397.5 356 397.5" fill="none" stroke="#000" stroke-width="3.4"/><path d="M344 373 C346 367 350 365.5 355 365.5 C362 365.5 366 368 369 373 C372 379 372 388 366 394 C363 397 360 397.5 356 397.5" fill="none" stroke="#fff" stroke-width="1.4"/><path d="M321 368 L337 391" fill="none" stroke="#000" stroke-width="3.6"/><path d="M321 368 L337 391" fill="none" stroke="#fff" stroke-width="1.6"/><g transform="translate(320,366) rotate(-35)"><path d="M-5 -2.5h2.5v-1h5v1h2.5v5h-2.5v1h-5v-1h-2.5z" fill="#fff" stroke="#000" stroke-width="1.1"/><path d="M-2 -1.5v3M2 -1.5v3" stroke="#000" stroke-width="0.9"/></g><path d="M368 366 L353.5 386" fill="none" stroke="#000" stroke-width="3.6"/><path d="M368 366 L353.5 386" fill="none" stroke="#fff" stroke-width="1.6"/><g transform="translate(367.5,365) rotate(35)"><path d="M-5 -2.5h2.5v-1h5v1h2.5v5h-2.5v1h-5v-1h-2.5z" fill="#fff" stroke="#000" stroke-width="1.1"/><path d="M-2 -1.5v3M2 -1.5v3" stroke="#000" stroke-width="0.9"/></g><path d="M330.5 376V399M357.5 376V399" stroke="#000" stroke-width="1"/><rect x="328.5" y="374.3" width="13" height="2" fill="#000"/><rect x="346" y="374.3" width="13.5" height="2" fill="#000"/><path d="M331 377.8H341M346 377.8H357" stroke="#000" stroke-width="0.8"/><path d="M331 378 L341 396 M357 378 L347 396" stroke="#000" stroke-width="0.9"/><path d="M333 393 q2 -4 4 -1 q2 3 -1 4 M336 389 l2 2 M349 392 q1 -3 4 -2 q2 2 0 4 l-2 1 M350 389 l3 1" fill="none" stroke="#000" stroke-width="0.9"/><rect x="341" y="375" width="5" height="24" fill="#000"/><rect x="342" y="378.5" width="3" height="1" fill="#fff"/><rect x="339" y="381.5" width="9" height="1" fill="#000"/><rect x="342" y="383" width="3" height="1" fill="#fff"/><rect x="342" y="391" width="3" height="1" fill="#fff"/><rect x="316" y="396.8" width="27" height="2.2" fill="#000"/><path d="M343 398.6H374" fill="none" stroke="#000" stroke-width="2.8"/><path d="M343 398.6H374" fill="none" stroke="#fff" stroke-width="1.0"/><path d="M374 397.8L380.5 395.8V402.2L374 400.2Z" fill="#fff" stroke="#000" stroke-width="1.1"/><path d="M311 393.5 q2.5 -1 4 0.5 q2.5 0 2.5 2.5 q1.5 2 0 3.5 q0 2.5 -2.5 2.5 q-1.5 1.5 -4 0.5 q-3 0 -3 -4.5 q0 -4.5 3 -5z" fill="#fff" stroke="#000" stroke-width="1.1"/><path d="M309 395 v5.5" stroke="#000" stroke-width="2"/><rect x="329.5" y="399.8" width="11.5" height="3.6" fill="#fff" stroke="#000" stroke-width="1"/><rect x="347" y="399.8" width="11.5" height="3.6" fill="#fff" stroke="#000" stroke-width="1"/><rect x="342.6" y="363" width="1.1" height="49" fill="#000"/></g>
<g transform="translate(418,0)"><path d="M344 373 C346 367 350 365.5 355 365.5 C362 365.5 366 368 369 373 C372 379 372 388 366 394 C363 397 360 397.5 356 397.5" fill="none" stroke="#000" stroke-width="3.4"/><path d="M344 373 C346 367 350 365.5 355 365.5 C362 365.5 366 368 369 373 C372 379 372 388 366 394 C363 397 360 397.5 356 397.5" fill="none" stroke="#fff" stroke-width="1.4"/><path d="M321 368 L337 391" fill="none" stroke="#000" stroke-width="3.6"/><path d="M321 368 L337 391" fill="none" stroke="#fff" stroke-width="1.6"/><g transform="translate(320,366) rotate(-35)"><path d="M-5 -2.5h2.5v-1h5v1h2.5v5h-2.5v1h-5v-1h-2.5z" fill="#fff" stroke="#000" stroke-width="1.1"/><path d="M-2 -1.5v3M2 -1.5v3" stroke="#000" stroke-width="0.9"/></g><path d="M368 366 L353.5 386" fill="none" stroke="#000" stroke-width="3.6"/><path d="M368 366 L353.5 386" fill="none" stroke="#fff" stroke-width="1.6"/><g transform="translate(367.5,365) rotate(35)"><path d="M-5 -2.5h2.5v-1h5v1h2.5v5h-2.5v1h-5v-1h-2.5z" fill="#fff" stroke="#000" stroke-width="1.1"/><path d="M-2 -1.5v3M2 -1.5v3" stroke="#000" stroke-width="0.9"/></g><path d="M330.5 376V399M357.5 376V399" stroke="#000" stroke-width="1"/><rect x="328.5" y="374.3" width="13" height="2" fill="#000"/><rect x="346" y="374.3" width="13.5" height="2" fill="#000"/><path d="M331 377.8H341M346 377.8H357" stroke="#000" stroke-width="0.8"/><path d="M331 378 L341 396 M357 378 L347 396" stroke="#000" stroke-width="0.9"/><path d="M333 393 q2 -4 4 -1 q2 3 -1 4 M336 389 l2 2 M349 392 q1 -3 4 -2 q2 2 0 4 l-2 1 M350 389 l3 1" fill="none" stroke="#000" stroke-width="0.9"/><rect x="341" y="375" width="5" height="24" fill="#000"/><rect x="342" y="378.5" width="3" height="1" fill="#fff"/><rect x="339" y="381.5" width="9" height="1" fill="#000"/><rect x="342" y="383" width="3" height="1" fill="#fff"/><rect x="342" y="391" width="3" height="1" fill="#fff"/><rect x="316" y="396.8" width="27" height="2.2" fill="#000"/><path d="M343 398.6H374" fill="none" stroke="#000" stroke-width="2.8"/><path d="M343 398.6H374" fill="none" stroke="#fff" stroke-width="1.0"/><path d="M374 397.8L380.5 395.8V402.2L374 400.2Z" fill="#fff" stroke="#000" stroke-width="1.1"/><path d="M311 393.5 q2.5 -1 4 0.5 q2.5 0 2.5 2.5 q1.5 2 0 3.5 q0 2.5 -2.5 2.5 q-1.5 1.5 -4 0.5 q-3 0 -3 -4.5 q0 -4.5 3 -5z" fill="#fff" stroke="#000" stroke-width="1.1"/><path d="M309 395 v5.5" stroke="#000" stroke-width="2"/><rect x="329.5" y="399.8" width="11.5" height="3.6" fill="#fff" stroke="#000" stroke-width="1"/><rect x="347" y="399.8" width="11.5" height="3.6" fill="#fff" stroke="#000" stroke-width="1"/><rect x="342.6" y="363" width="1.1" height="49" fill="#000"/></g></svg>
<div class="trk" style="left:817px;top:57px;width:16px;height:361px"></div>
<div class="sb" style="left:817px;top:57px;width:16px;height:16px"><svg class="a" style="left:3px;top:5px" width="8" height="5"><path d="M3.5 0L7 4H0Z" fill="#000"/></svg></div>
<div class="sb" style="left:817px;top:73px;width:16px;height:314px"></div>
<div class="sb" style="left:817px;top:402px;width:16px;height:16px"><svg class="a" style="left:3px;top:5px" width="8" height="5"><path d="M0 0H7L3.5 4Z" fill="#000"/></svg></div>
<div class="trk" style="left:272px;top:418px;width:545px;height:16px"></div>
<div class="sb" style="left:272px;top:418px;width:16px;height:16px"><svg class="a" style="left:4px;top:3px" width="5" height="8"><path d="M0 3.5L4 0V7Z" fill="#000"/></svg></div>
<div class="sb" style="left:352px;top:418px;width:370px;height:16px"></div>
<div class="sb" style="left:801px;top:418px;width:16px;height:16px"><svg class="a" style="left:5px;top:3px" width="5" height="8"><path d="M0 0L4 3.5L0 7Z" fill="#000"/></svg></div>
<div class="a" style="left:817px;top:418px;width:16px;height:16px;background:#D4D0C8;"></div>
<div class="a" style="left:10px;top:436px;width:651px;height:1px;background:#808080;"></div>
<div class="a" style="left:10px;top:436px;width:1px;height:76px;background:#808080;"></div>
<div class="a" style="left:10px;top:511px;width:651px;height:1px;background:#fff;"></div>
<div class="a" style="left:660px;top:436px;width:1px;height:76px;background:#fff;"></div>
<div class="a" style="left:11px;top:437px;width:649px;height:1px;background:#404040;"></div>
<div class="a" style="left:11px;top:437px;width:1px;height:74px;background:#404040;"></div>
<div class="a" style="left:11px;top:510px;width:649px;height:1px;background:#D4D0C8;"></div>
<div class="a" style="left:659px;top:437px;width:1px;height:74px;background:#D4D0C8;"></div>
<div class="a" style="left:16px;top:442px;width:64px;height:1px;background:#808080;"></div>
<div class="a" style="left:16px;top:442px;width:1px;height:65px;background:#808080;"></div>
<div class="a" style="left:16px;top:506px;width:64px;height:1px;background:#fff;"></div>
<div class="a" style="left:79px;top:442px;width:1px;height:65px;background:#fff;"></div>
<div class="a" style="left:17px;top:443px;width:62px;height:1px;background:#404040;"></div>
<div class="a" style="left:17px;top:443px;width:1px;height:63px;background:#404040;"></div>
<div class="a" style="left:17px;top:505px;width:62px;height:1px;background:#D4D0C8;"></div>
<div class="a" style="left:78px;top:443px;width:1px;height:63px;background:#D4D0C8;"></div>
<div class="a" style="left:93px;top:450px;white-space:pre;line-height:14px"><b>PipeID:</b></div>
<div class="a" style="left:139px;top:450px;white-space:pre;line-height:14px">53</div>
<div class="a" style="left:93px;top:482px;white-space:pre;line-height:14px"><b>Length:</b></div>
<div class="a" style="left:139px;top:482px;white-space:pre;line-height:14px">6</div>
<div class="a" style="left:356px;top:450px;white-space:pre;line-height:14px;letter-spacing:0.38px"><b>Price per pipe:</b></div>
<div class="a" style="left:442px;top:450px;white-space:pre;line-height:14px">8.99</div>
<div class="a" style="left:356px;top:482px;white-space:pre;line-height:14px;letter-spacing:0.27px"><b>Description:</b></div>
<div class="a" style="left:442px;top:482px;white-space:pre;line-height:14px">rubber pipe</div>
<div class="a" style="left:661px;top:436px;width:174px;height:1px;background:#808080;"></div>
<div class="a" style="left:661px;top:436px;width:1px;height:76px;background:#808080;"></div>
<div class="a" style="left:661px;top:511px;width:174px;height:1px;background:#fff;"></div>
<div class="a" style="left:834px;top:436px;width:1px;height:76px;background:#fff;"></div>
<div class="a" style="left:662px;top:437px;width:172px;height:1px;background:#404040;"></div>
<div class="a" style="left:662px;top:437px;width:1px;height:74px;background:#404040;"></div>
<div class="a" style="left:662px;top:510px;width:172px;height:1px;background:#D4D0C8;"></div>
<div class="a" style="left:833px;top:437px;width:1px;height:74px;background:#D4D0C8;"></div>
<div class="a" style="left:663px;top:438px;width:170px;height:14px;background:#FFFFC0;"></div>
<div class="a" style="left:663px;top:452px;width:96px;height:14px;background:#FFE0C0;"></div>
<div class="a" style="left:759px;top:452px;width:74px;height:14px;background:#FFC0C0;"></div>
<div class="tx" style="left:663px;top:438px;width:170px;text-align:center;font-weight:bold;font-size:11.3px;line-height:14px">Sample Diagram Project</div>
<div class="tx" style="left:663px;top:452px;width:96px;text-align:center;font-weight:bold;font-size:11.3px;line-height:14px">10.0 x 5.0 km</div>
<div class="tx" style="left:759px;top:452px;width:74px;text-align:center;font-weight:bold;font-size:11.3px;line-height:14px">25-06-04</div>
<div class="tx" style="left:659px;top:470px;width:170px;text-align:center;font-size:10.8px;line-height:13px">Gennady Petrov<br>(516) 997-5596<br>Info@bennet-tec.com</div>
</body></html>
